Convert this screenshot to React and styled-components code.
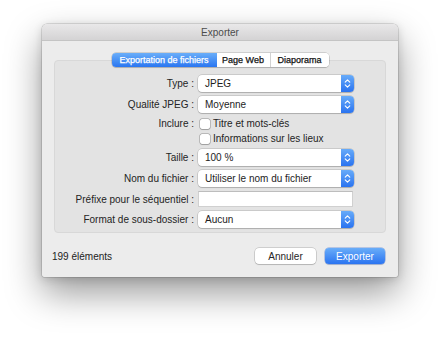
import styled, { createGlobalStyle } from "styled-components"

const GlobalStyle = createGlobalStyle`
html, body {
    margin: 0;
    background: #ffffff;
}
body {
    font-family: "Liberation Sans", Arial, sans-serif;
    font-size: 10px;
    color: #222222;
}
`

function Stepper() {
  return (
    <StepBox>
      <svg width="7" height="11" viewBox="0 0 7 11">
        <path d="M1.2 4.2 L3.5 1.8 L5.8 4.2" fill="none" stroke="#fff" strokeWidth="1.1" strokeLinecap="round" strokeLinejoin="round" />
        <path d="M1.2 6.8 L3.5 9.2 L5.8 6.8" fill="none" stroke="#fff" strokeWidth="1.1" strokeLinecap="round" strokeLinejoin="round" />
      </svg>
    </StepBox>
  )
}

function Select({ value }) {
  return (
    <SelectBox>
      <span className="val">{value}</span>
      <Stepper />
    </SelectBox>
  )
}

function Check({ label }) {
  return (
    <CheckRow>
      <Box />
      <span>{label}</span>
    </CheckRow>
  )
}

function App() {
  return (
    <>
      <GlobalStyle />
      <Stage>
        <Win>
          <TitleBar>Exporter</TitleBar>
          <Body>
            <Tabs>
              <Tab $active $w={105}>Exportation de fichiers</Tab>
              <Tab $w={54}>Page Web</Tab>
              <Tab $w={58} $last>Diaporama</Tab>
            </Tabs>
            <Panel>
              <Form>
                <Label>Type :</Label>
                <Select value="JPEG" />
                <Label>Qualité JPEG :</Label>
                <Select value="Moyenne" />
                <Label $top>Inclure :</Label>
                <Checks>
                  <Check label="Titre et mots-clés" />
                  <Check label="Informations sur les lieux" />
                </Checks>
                <Label>Taille :</Label>
                <Select value="100 %" />
                <Label>Nom du fichier :</Label>
                <Select value="Utiliser le nom du fichier" />
                <Label>Préfixe pour le séquentiel :</Label>
                <TextInput />
                <Label>Format de sous-dossier :</Label>
                <Select value="Aucun" />
              </Form>
            </Panel>
            <Footer>
              <Count>199 éléments</Count>
              <Buttons>
                <Button>Annuler</Button>
                <Button $primary>Exporter</Button>
              </Buttons>
            </Footer>
          </Body>
        </Win>
      </Stage>
    </>
  )
}

export default App

const Stage = styled.div`
min-height: 338px;
box-sizing: border-box;
padding: 24px 0 0 42px;
background: #ffffff;
`
const Win = styled.div`
width: 356px;
height: 253px;
box-sizing: border-box;
background: #ececec;
border-radius: 5px 5px 2px 2px;
box-shadow: 0 0 0 0.5px rgba(0,0,0,0.22), 0 16px 36px rgba(0,0,0,0.4), 0 2px 10px rgba(0,0,0,0.14);
display: flex;
flex-direction: column;
`
const TitleBar = styled.div`
height: 17px;
flex: none;
display: flex;
align-items: center;
justify-content: center;
background: linear-gradient(#e9e8e9, #d4d3d4);
border-bottom: 1px solid #c4c4c4;
border-radius: 5px 5px 0 0;
box-sizing: border-box;
color: #4c4c4c;
font-size: 10px;
`
const Body = styled.div`
padding: 12px 12px 12px 12px;
display: flex;
flex-direction: column;
`
const Tabs = styled.div`
align-self: center;
display: flex;
height: 14px;
margin-bottom: -7px;
position: relative;
z-index: 1;
border-radius: 4px;
background: #fff;
box-shadow: 0 0 0 0.5px rgba(0,0,0,0.25), 0 1px 1px rgba(0,0,0,0.12);
overflow: hidden;
`
const Tab = styled.div`
width: ${p => p.$w}px;
display: flex;
align-items: center;
justify-content: center;
font-size: 9px;
white-space: nowrap;
color: ${p => p.$active ? "#ffffff" : "#111111"};
-webkit-text-stroke: 0.25px ${p => p.$active ? "#ffffff" : "#111111"};
background: ${p => p.$active ? "linear-gradient(#6aaef9, #2a76f1)" : "#ffffff"};
border-right: ${p => p.$last || p.$active ? "none" : "1px solid #d2d2d2"};
box-sizing: border-box;
`
const Panel = styled.div`
background: #e3e3e3;
border: 1px solid #d8d8d8;
border-radius: 4px;
padding: 14px 0 4px 8px;
`
const Form = styled.div`
display: grid;
grid-template-columns: 131px 156px;
column-gap: 4px;
row-gap: 4px;
align-items: center;
`
const Label = styled.div`
text-align: right;
white-space: nowrap;
color: #242424;
align-self: ${p => p.$top ? "start" : "center"};
line-height: 13px;
`
const SelectBox = styled.div`
height: 17px;
box-sizing: border-box;
display: flex;
align-items: center;
background: #fff;
border-radius: 4px;
box-shadow: 0 0 0 0.5px rgba(0,0,0,0.22), 0 1px 1px rgba(0,0,0,0.14);

.val {
    flex: 1;
    padding-left: 7px;
    white-space: nowrap;
    color: #1d1d1d;
}
`
const StepBox = styled.div`
width: 13px;
height: 17px;
display: flex;
align-items: center;
justify-content: center;
border-radius: 0 4px 4px 0;
background: linear-gradient(#67abf9, #2a73f0);
`
const Checks = styled.div`
display: flex;
flex-direction: column;
gap: 2px;
padding-left: 2px;
`
const CheckRow = styled.div`
display: flex;
align-items: center;
gap: 3px;
height: 13px;
color: #232323;
`
const Box = styled.div`
width: 10px;
height: 10px;
box-sizing: border-box;
background: #fff;
border-radius: 2px;
box-shadow: 0 0 0 0.5px rgba(0,0,0,0.35), 0 0.5px 1px rgba(0,0,0,0.15);
`
const TextInput = styled.div`
height: 16px;
width: 155px;
box-sizing: border-box;
background: #fff;
border: 1px solid #d0d0d0;
border-top-color: #bdbdbd;
`
const Footer = styled.div`
margin-top: 15px;
display: flex;
align-items: center;
justify-content: space-between;
padding-right: 1px;
`
const Count = styled.div`
margin-left: -2px;
color: #222;
`
const Buttons = styled.div`
display: flex;
gap: 9px;
`
const Button = styled.div`
width: ${p => p.$primary ? 60 : 61}px;
height: 16px;
display: flex;
align-items: center;
justify-content: center;
border-radius: 4px;
color: ${p => p.$primary ? "#ffffff" : "#262626"};
background: ${p => p.$primary ? "linear-gradient(#69adf9, #2b74f1)" : "#ffffff"};
box-shadow: ${p => p.$primary
    ? "0 0 0 0.5px rgba(20,80,200,0.5), 0 1px 1px rgba(0,0,0,0.12)"
    : "0 0 0 0.5px rgba(0,0,0,0.25), 0 1px 1px rgba(0,0,0,0.12)"};
`
